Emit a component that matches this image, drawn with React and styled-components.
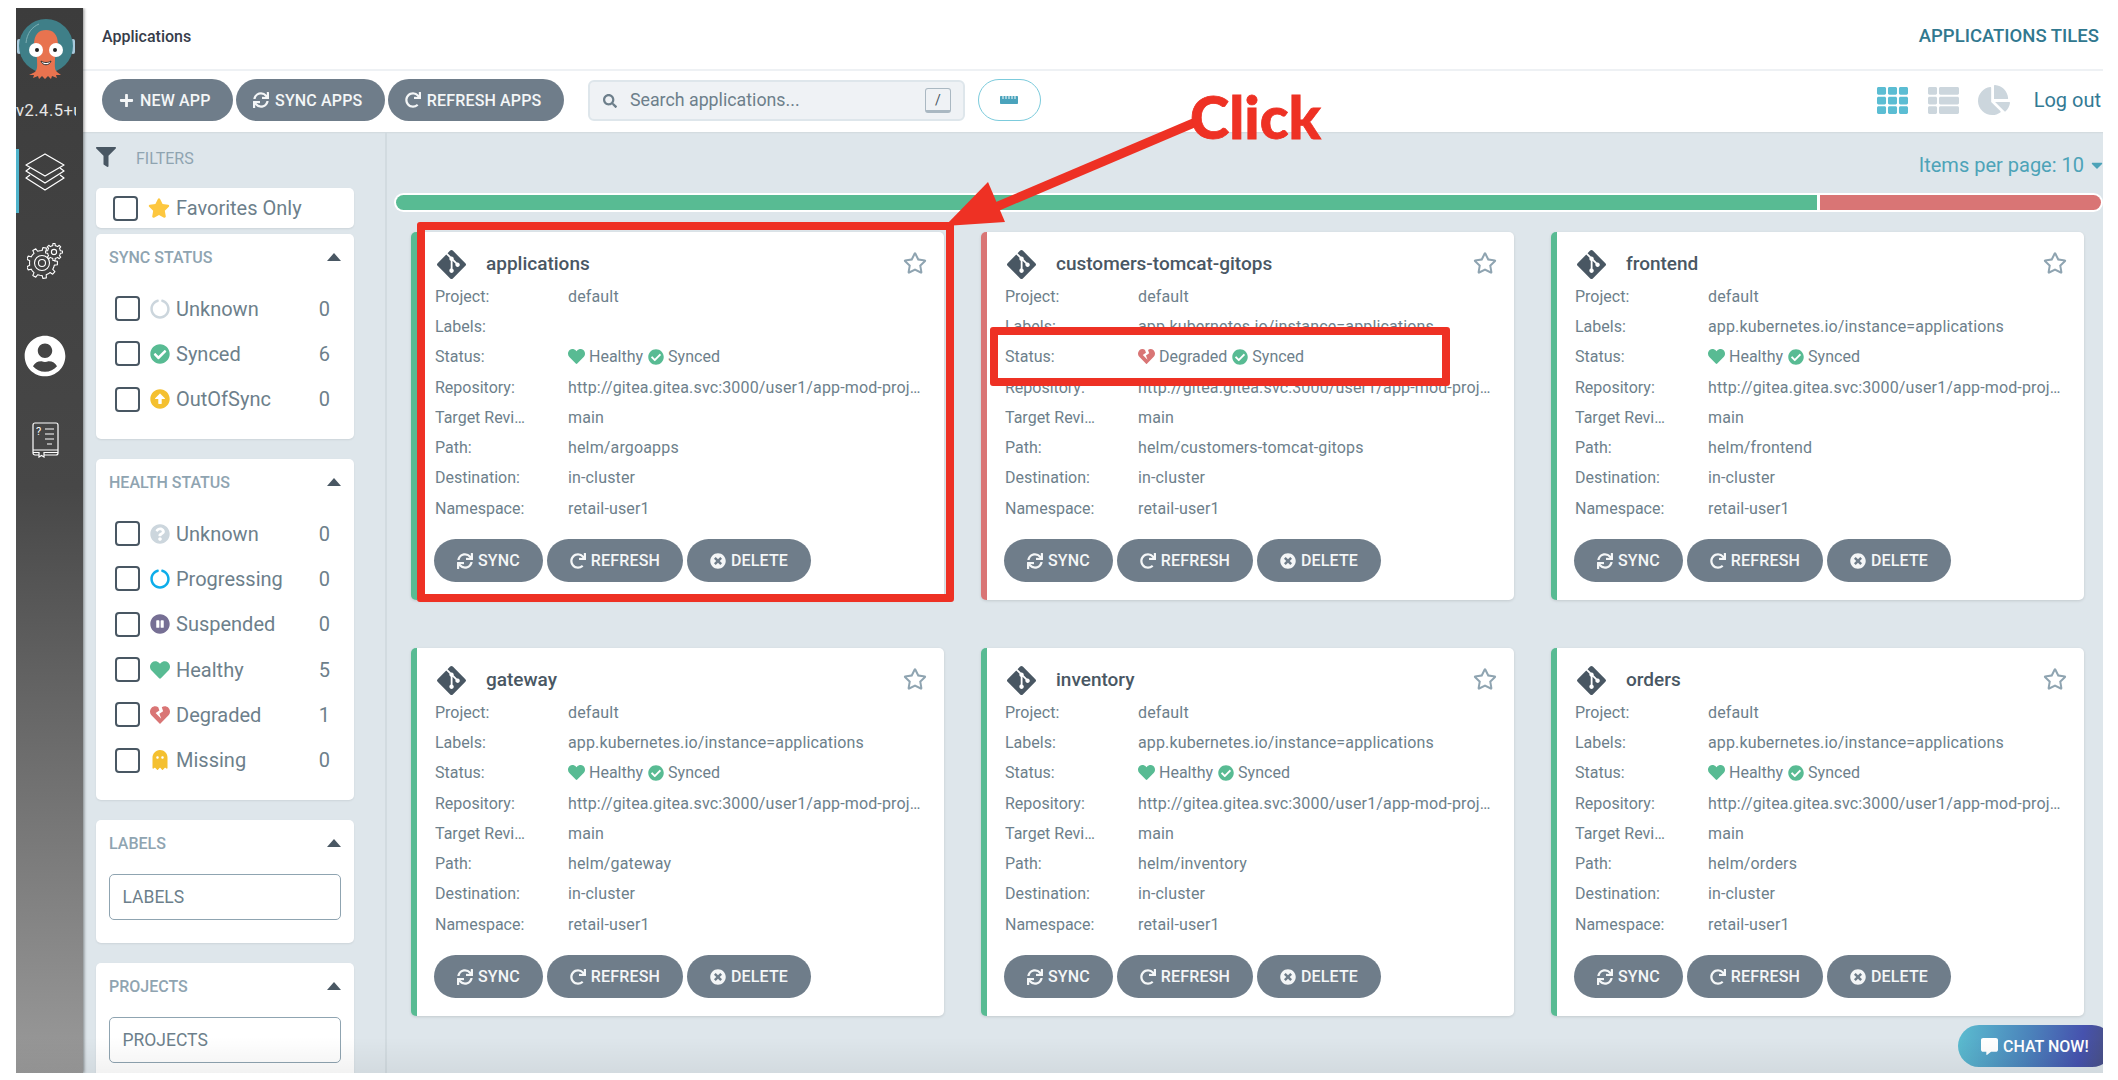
import React from 'react';
import styled, { createGlobalStyle } from 'styled-components';
import {
  FaPlus, FaSync, FaRedo, FaSearch, FaRulerHorizontal, FaTh, FaThList, FaChartPie, FaFilter, FaStar,
  FaRegStar, FaCaretDown, FaCircleNotch, FaCheckCircle, FaArrowAltCircleUp, FaQuestionCircle,
  FaPauseCircle, FaHeart, FaHeartBroken, FaGhost, FaGitAlt, FaTimesCircle, FaUserCircle, FaCommentAlt,
} from 'react-icons/fa';

const GlobalStyle = createGlobalStyle`
  html, body { margin: 0; padding: 0; background: #fff; }
  body { font-family: Roboto, "Liberation Sans", sans-serif; }
  * { box-sizing: border-box; }
`;

const gearPath = (cx, cy, r1, r2, n) => {
  let d = '';
  for (let i = 0; i < n; i++) {
    const step = (Math.PI * 2) / n;
    const a = i * step;
    const pts = [
      [r1, a - step * 0.5],
      [r1, a - step * 0.24],
      [r2, a - step * 0.16],
      [r2, a + step * 0.16],
      [r1, a + step * 0.24],
    ];
    pts.forEach(([r, t], j) => {
      d += `${i === 0 && j === 0 ? 'M' : 'L'}${(cx + r * Math.cos(t)).toFixed(2)} ${(cy + r * Math.sin(t)).toFixed(2)}`;
    });
  }
  return d + 'Z';
};

const ArgoLogo = () => (
  <svg width="60" height="62" viewBox="0 0 60 62">
    <rect x="1" y="20" width="4" height="15" rx="2" fill="#a9c9dc" />
    <rect x="55" y="20" width="4" height="15" rx="2" fill="#a9c9dc" />
    <circle cx="30" cy="27" r="27" fill="#3f7f88" />
    <path d="M10 24C11 14 16 8 23 5" fill="none" stroke="#7fb0b5" strokeWidth="1" />
    <path d="M19 53c3-3 2-8 2-13 0-3-3-7-3-14C18 15 23 11 30 11s12 4 12 15c0 7-3 11-3 14 0 5-1 10 2 13l4 3-5 0 1 3-5-2-1 3-3-3-3 3-3-3-3 3-1-3-5 2 1-3-5 0z" fill="#e8734f" />
    <circle cx="20" cy="31" r="7" fill="#fff" />
    <circle cx="40" cy="31" r="7" fill="#fff" />
    <circle cx="21" cy="31" r="2" fill="#222" />
    <circle cx="39" cy="31" r="2" fill="#222" />
    <path d="M25 42c3 2 7 2 10 0-1 5-9 5-10 0z" fill="#fff" stroke="#333" strokeWidth="1" />
  </svg>
);

const LayersIcon = () => (
  <svg width="40" height="38" viewBox="0 0 40 38" fill="none" stroke="#fff" strokeWidth="1.3" strokeLinejoin="round">
    <path d="M20 1 39 12 20 23 1 12Z" />
    <path d="M5 15 1 18 20 30 39 18 35 15" />
    <path d="M5 22 1 25 20 37 39 25 35 22" />
  </svg>
);

const GearsIcon = () => (
  <svg width="36" height="36" viewBox="0 0 36 36" fill="none" stroke="#fff" strokeWidth="1.1" strokeLinejoin="round">
    <path d={gearPath(15, 20, 12.5, 15.5, 9)} />
    <circle cx="15" cy="20" r="7.5" />
    <circle cx="15" cy="20" r="3.5" />
    <path d={gearPath(27, 9, 6.5, 8.5, 8)} fill="#414141" />
    <circle cx="27" cy="9" r="2.6" />
  </svg>
);

const BookIcon = () => (
  <svg width="27" height="36" viewBox="0 0 27 36" fill="none" stroke="#fff" strokeWidth="1.2">
    <rect x="1" y="1" width="25" height="32" rx="2" />
    <path d="M1 28h25M1 30.5h25" />
    <path d="M7 30v5l2.500-1.500L12 35v-5" fill="#444" />
    <path d="M13 7h9M13 12h9M13 17h9M15 22h5" />
    <text x="4" y="13" fill="#fff" stroke="none" fontSize="11" fontFamily="Roboto">?</text>
  </svg>
);

const Frame = styled.div`
  position: relative;
  display: flex;
  width: 2087px;
  height: 1065px;
  margin: 8px 15px 7px 16px;
  overflow: hidden;
  background: #fff;
`;

const Sidebar = styled.nav`
  flex: 0 0 67px;
  display: flex;
  flex-direction: column;
  background: linear-gradient(#3c3c3c 0%, #474747 45%, #9a9a9a 100%);
  box-shadow: 1px 0 3px rgba(0, 0, 0, 0.45);
  z-index: 2;
`;

const LogoWrap = styled.div`
  display: flex;
  justify-content: center;
  padding: 11px 7px 0 0;
`;

const Version = styled.div`
  margin-top: 18px;
  height: 24px;
  line-height: 24px;
  width: 60px;
  overflow: hidden;
  white-space: nowrap;
  font-size: 16.5px;
  letter-spacing: 0.5px;
  color: #e6e6e6;
`;

const NavList = styled.div`
  margin-top: 26px;
  display: flex;
  flex-direction: column;
`;

const NavItem = styled.div`
  height: 64px;
  display: flex;
  align-items: center;
  justify-content: center;
  margin-top: ${(p) => p.$mt || 0}px;
  padding-bottom: ${(p) => (p.$active ? 18 : 0)}px;
  border-left: 3px solid ${(p) => (p.$active ? '#4fb3cb' : 'transparent')};
  padding-right: 12px;
  color: #fff;
`;

const Main = styled.div`
  flex: 1;
  min-width: 0;
  display: flex;
  flex-direction: column;
`;

const Header = styled.header`
  height: 63px;
  display: flex;
  align-items: center;
  justify-content: space-between;
  padding: 0 4px 5px 19px;
  border-bottom: 2px solid #eef1f4;
`;

const Crumb = styled.div`
  font-size: 16px;
  font-weight: 500;
  color: #363c4a;
`;

const PageTitle = styled.div`
  font-size: 18.500px;
  font-weight: 500;
  color: #31788f;
`;

const Toolbar = styled.div`
  height: 61px;
  display: flex;
  align-items: flex-start;
  padding: 8px 2px 0 19px;
`;

const ActionGroup = styled.div`
  display: flex;
  gap: 3px;
`;

const PillButton = styled.button`
  display: inline-flex;
  align-items: center;
  justify-content: center;
  gap: ${(p) => (p.$small ? 5 : 6)}px;
  height: ${(p) => (p.$small ? 43 : 42)}px;
  padding: ${(p) => (p.$small ? '0 23px' : '0 22.500px 0 17px')};
  border: 0;
  border-radius: 22px;
  background: #6f7d8a;
  color: #f4f6f7;
  font-family: inherit;
  font-size: 16px;
  font-weight: 500;
  letter-spacing: 0.15px;
  white-space: nowrap;
`;

const SearchBox = styled.div`
  width: 377px;
  height: 41px;
  margin-left: 24px;
  margin-top: 1px;
  display: flex;
  align-items: center;
  padding: 0 12px 0 13px;
  border: 2px solid #dee6eb;
  border-radius: 6px;
  background: #eff2f5;
  color: #6d7f8b;
`;

const SearchInput = styled.input`
  flex: 1;
  min-width: 0;
  margin-left: 11px;
  margin-top: -2px;
  border: 0;
  outline: 0;
  background: transparent;
  font-family: inherit;
  font-size: 17.800px;
  color: #6d7f8b;
  &::placeholder { color: #6d7f8b; opacity: 1; }
`;

const Kbd = styled.span`
  width: 26px;
  height: 25px;
  display: flex;
  align-items: center;
  justify-content: center;
  border: 1px solid #aab8c2;
  border-bottom-width: 3px;
  border-radius: 3px;
  font-size: 14px;
  color: #495763;
`;

const ToggleButton = styled.button`
  width: 63px;
  height: 42px;
  margin-left: 13px;
  display: flex;
  align-items: center;
  justify-content: center;
  border: 1.500px solid #7ccbdc;
  border-radius: 21px;
  background: #fff;
  color: #4aa3bc;
`;

const ViewSwitch = styled.div`
  margin-left: auto;
  display: flex;
  align-items: center;
  height: 42px;
  color: #ccd6dd;
`;

const ViewIcon = styled.span`
  display: flex;
  margin-right: ${(p) => p.$mr}px;
  color: ${(p) => (p.$active ? '#5bbdd3' : '#ccd6dd')};
`;

const LogOut = styled.span`
  font-size: 20px;
  color: #337a94;
`;

const Body = styled.div`
  flex: 1;
  min-height: 0;
  display: flex;
  background: #dee6eb;
  box-shadow: inset 0 2px 2px -1px rgba(0, 0, 0, 0.06);
`;

const Filters = styled.aside`
  flex: 0 0 304px;
  padding: 15px 31px 0 13px;
  border-right: 2px solid #d2dbe0;
`;

const FiltersHead = styled.div`
  height: 22px;
  display: flex;
  align-items: center;
  gap: 20px;
  margin-bottom: 19px;
  color: #8fa4b1;
  font-size: 16px;
  svg { color: #495763; margin-top: -2px; }
`;

const FavoriteCard = styled.div`
  height: 40px;
  display: flex;
  align-items: center;
  padding-left: 17px;
  margin-bottom: 6px;
  border-radius: 5px;
  background: #fff;
  font-size: 20px;
  color: #6d7f8b;
  box-shadow: 0 1px 2px rgba(0, 0, 0, 0.08);
`;

const FilterCard = styled.section`
  height: ${(p) => p.$height}px;
  margin-bottom: 20px;
  padding: 13px 13px 0;
  border-radius: 5px;
  background: #fff;
  box-shadow: 0 1px 2px rgba(0, 0, 0, 0.08);
`;

const FilterTitle = styled.div`
  height: 20px;
  display: flex;
  align-items: center;
  justify-content: space-between;
  font-size: 16px;
  font-weight: 500;
  color: #8fa4b1;
`;

const CollapseCaret = styled.span`
  width: 0;
  height: 0;
  border-left: 7.500px solid transparent;
  border-right: 7.500px solid transparent;
  border-bottom: 8px solid #495763;
`;

const FilterRows = styled.div`
  margin-top: 19px;
`;

const FilterRow = styled.div`
  height: 45.300px;
  display: flex;
  align-items: center;
  padding: 0 11px 0 6px;
  font-size: 20px;
  color: #6d7f8b;
`;

const Checkbox = styled.span`
  flex: 0 0 25px;
  height: 25px;
  margin-right: 10px;
  border: 2px solid #495763;
  border-radius: 4px;
  background: #fff;
`;

const FilterIcon = styled.span`
  display: flex;
  margin-right: 6px;
  color: ${(p) => p.$color};
`;

const Count = styled.span`
  margin-left: auto;
`;

const FilterInput = styled.input`
  display: block;
  width: 100%;
  height: 46px;
  margin-top: 21px;
  padding: 0 12.500px;
  border: 1px solid #8fa4b1;
  border-radius: 5px;
  outline: 0;
  background: #fff;
  font-family: inherit;
  font-size: 17.500px;
  color: #6d7f8b;
  &::placeholder { color: #6d7f8b; opacity: 1; }
`;

const Content = styled.div`
  flex: 1;
  min-width: 0;
  padding-top: 21px;
`;

const ItemsPerPage = styled.div`
  height: 24px;
  display: flex;
  align-items: center;
  justify-content: flex-end;
  gap: 4px;
  font-size: 20px;
  color: #4da3b8;
  svg { margin-right: -3px; }
`;

const StatusBar = styled.div`
  height: 19px;
  margin: 16px 0 20px 7px;
  display: flex;
  gap: 3px;
  padding: 2px;
  border-radius: 10px;
  background: #fff;
`;

const BarPart = styled.div`
  flex: ${(p) => p.$grow} 0 0;
  background: ${(p) => p.$color};
  border-radius: ${(p) => p.$radius};
`;

const CardGrid = styled.div`
  display: grid;
  grid-template-columns: repeat(3, 533px);
  grid-auto-rows: 368px;
  column-gap: 37px;
  row-gap: 48px;
  margin-left: 24px;
`;

const AppCard = styled.article`
  padding: 18px 18px 0;
  border-left: 6px solid ${(p) => (p.$degraded ? '#d97575' : '#58bb93')};
  border-radius: 5px;
  background: #fff;
  box-shadow: 0 1px 3px rgba(0, 0, 0, 0.12);
`;

const CardHead = styled.div`
  height: 31px;
  display: flex;
  align-items: center;
  gap: 18px;
  padding-bottom: 3px;
  color: #495763;
`;

const CardName = styled.div`
  padding-bottom: 2px;
  font-size: 19px;
  font-weight: 500;
  color: #495763;
`;

const StarButton = styled.span`
  margin-left: auto;
  margin-right: -1px;
  padding-bottom: 2px;
  display: flex;
  color: #8fa4b1;
`;

const InfoRow = styled.div`
  height: 30.300px;
  display: grid;
  grid-template-columns: 92px 353px;
  column-gap: 41px;
  align-items: center;
  font-size: 16px;
  color: #6d7f8b;
`;

const InfoLabel = styled.span`
  overflow: hidden;
  white-space: nowrap;
  text-overflow: ellipsis;
`;

const InfoValue = styled.span`
  overflow: hidden;
  white-space: nowrap;
  text-overflow: ellipsis;
  letter-spacing: 0.15px;
`;

const StatusValue = styled.span`
  display: flex;
  align-items: center;
  gap: 4px;
`;

const StatusIcon = styled.span`
  display: flex;
  margin-left: ${(p) => p.$ml || 0}px;
  color: ${(p) => p.$color};
`;

const CardActions = styled.div`
  display: flex;
  gap: 4px;
  margin: 16px 0 0 -1px;
`;

const ClickLabel = styled.div`
  position: absolute;
  left: 1174px;
  top: 73px;
  font-family: Lato, "Liberation Sans", sans-serif;
  font-size: 59.500px;
  font-weight: 900;
  line-height: 70px;
  color: #ee3124;
  -webkit-text-stroke: 0.8px #ee3124;
  z-index: 5;
`;

const ArrowLayer = styled.svg`
  position: absolute;
  left: 900px;
  top: 90px;
  z-index: 5;
`;

const Highlight = styled.div`
  position: absolute;
  left: ${(p) => p.$left}px;
  top: ${(p) => p.$top}px;
  width: ${(p) => p.$width}px;
  height: ${(p) => p.$height}px;
  border: 8px solid #ee3124;
  border-radius: 3px;
  z-index: 4;
`;

const ChatButton = styled.button`
  position: absolute;
  right: -10px;
  bottom: 6px;
  width: 155px;
  height: 42px;
  display: flex;
  align-items: center;
  gap: 5px;
  padding: 0 0 0 23px;
  border: 0;
  border-radius: 21px;
  background: linear-gradient(100deg, #5bbdd0 0%, #4b83bb 45%, #4652ae 78%, #4a5078 100%);
  color: #fff;
  font-family: inherit;
  font-size: 16px;
  font-weight: 500;
  z-index: 3;
`;

const BottomFade = styled.div`
  position: absolute;
  left: 0;
  right: 0;
  bottom: 0;
  height: 36px;
  background: linear-gradient(rgba(0, 0, 0, 0), rgba(0, 0, 0, 0.05));
  pointer-events: none;
  z-index: 3;
`;

const LABEL = 'app.kubernetes.io/instance=applications';

const apps = [
  { name: 'applications', labels: '', path: 'helm/argoapps' },
  { name: 'customers-tomcat-gitops', labels: LABEL, path: 'helm/customers-tomcat-gitops', degraded: true },
  { name: 'frontend', labels: LABEL, path: 'helm/frontend' },
  { name: 'gateway', labels: LABEL, path: 'helm/gateway' },
  { name: 'inventory', labels: LABEL, path: 'helm/inventory' },
  { name: 'orders', labels: LABEL, path: 'helm/orders' },
];

const syncFilters = [
  { label: 'Unknown', count: 0, Icon: FaCircleNotch, color: '#ccd6dd' },
  { label: 'Synced', count: 6, Icon: FaCheckCircle, color: '#58bb93' },
  { label: 'OutOfSync', count: 0, Icon: FaArrowAltCircleUp, color: '#f4c030' },
];

const healthFilters = [
  { label: 'Unknown', count: 0, Icon: FaQuestionCircle, color: '#ccd6dd' },
  { label: 'Progressing', count: 0, Icon: FaCircleNotch, color: '#0dadea' },
  { label: 'Suspended', count: 0, Icon: FaPauseCircle, color: '#766f94' },
  { label: 'Healthy', count: 5, Icon: FaHeart, color: '#58bb93' },
  { label: 'Degraded', count: 1, Icon: FaHeartBroken, color: '#d97575' },
  { label: 'Missing', count: 0, Icon: FaGhost, color: '#f4c030' },
];

const FilterList = ({ items }) => (
  <FilterRows>
    {items.map((f) => (
      <FilterRow key={f.label}>
        <Checkbox />
        <FilterIcon $color={f.color}><f.Icon size={20} /></FilterIcon>
        {f.label}
        <Count>{f.count}</Count>
      </FilterRow>
    ))}
  </FilterRows>
);

const Card = ({ app }) => (
  <AppCard $degraded={app.degraded}>
    <CardHead>
      <FaGitAlt size={33} />
      <CardName>{app.name}</CardName>
      <StarButton><FaRegStar size={24} /></StarButton>
    </CardHead>
    <InfoRow><InfoLabel>Project:</InfoLabel><InfoValue>default</InfoValue></InfoRow>
    <InfoRow><InfoLabel>Labels:</InfoLabel><InfoValue>{app.labels}</InfoValue></InfoRow>
    <InfoRow>
      <InfoLabel>Status:</InfoLabel>
      <StatusValue>
        <StatusIcon $color={app.degraded ? '#d97575' : '#58bb93'}>
          {app.degraded ? <FaHeartBroken size={17} /> : <FaHeart size={17} />}
        </StatusIcon>
        {app.degraded ? 'Degraded' : 'Healthy'}
        <StatusIcon $color="#58bb93" $ml={1}><FaCheckCircle size={16} /></StatusIcon>
        Synced
      </StatusValue>
    </InfoRow>
    <InfoRow>
      <InfoLabel>Repository:</InfoLabel>
      <InfoValue>http://gitea.gitea.svc:3000/user1/app-mod-projects.git</InfoValue>
    </InfoRow>
    <InfoRow><InfoLabel>Target Revision:</InfoLabel><InfoValue>main</InfoValue></InfoRow>
    <InfoRow><InfoLabel>Path:</InfoLabel><InfoValue>{app.path}</InfoValue></InfoRow>
    <InfoRow><InfoLabel>Destination:</InfoLabel><InfoValue>in-cluster</InfoValue></InfoRow>
    <InfoRow><InfoLabel>Namespace:</InfoLabel><InfoValue>retail-user1</InfoValue></InfoRow>
    <CardActions>
      <PillButton $small><FaSync size={16} />SYNC</PillButton>
      <PillButton $small><FaRedo size={16} />REFRESH</PillButton>
      <PillButton $small><FaTimesCircle size={16} />DELETE</PillButton>
    </CardActions>
  </AppCard>
);

const App = () => (
  <>
    <GlobalStyle />
    <Frame>
      <Sidebar>
        <LogoWrap><ArgoLogo /></LogoWrap>
        <Version>v2.4.5+unknown</Version>
        <NavList>
          <NavItem $active><LayersIcon /></NavItem>
          <NavItem $mt={16}><GearsIcon /></NavItem>
          <NavItem $mt={31}><FaUserCircle size={42} /></NavItem>
          <NavItem $mt={20}><BookIcon /></NavItem>
        </NavList>
      </Sidebar>
      <Main>
        <Header>
          <Crumb>Applications</Crumb>
          <PageTitle>APPLICATIONS TILES</PageTitle>
        </Header>
        <Toolbar>
          <ActionGroup>
            <PillButton><FaPlus size={15} />NEW APP</PillButton>
            <PillButton><FaSync size={16} />SYNC APPS</PillButton>
            <PillButton><FaRedo size={16} />REFRESH APPS</PillButton>
          </ActionGroup>
          <SearchBox>
            <FaSearch size={14} />
            <SearchInput placeholder="Search applications..." />
            <Kbd>/</Kbd>
          </SearchBox>
          <ToggleButton><FaRulerHorizontal size={18} /></ToggleButton>
          <ViewSwitch>
            <ViewIcon $active $mr={20}><FaTh size={31} /></ViewIcon>
            <ViewIcon $mr={19}><FaThList size={31} /></ViewIcon>
            <ViewIcon $mr={24}><FaChartPie size={32} /></ViewIcon>
            <LogOut>Log out</LogOut>
          </ViewSwitch>
        </Toolbar>
        <Body>
          <Filters>
            <FiltersHead><FaFilter size={20} />FILTERS</FiltersHead>
            <FavoriteCard>
              <Checkbox />
              <FilterIcon $color="#fdc73f"><FaStar size={22} /></FilterIcon>
              Favorites Only
            </FavoriteCard>
            <FilterCard $height={205}>
              <FilterTitle>SYNC STATUS<CollapseCaret /></FilterTitle>
              <FilterList items={syncFilters} />
            </FilterCard>
            <FilterCard $height={341}>
              <FilterTitle>HEALTH STATUS<CollapseCaret /></FilterTitle>
              <FilterList items={healthFilters} />
            </FilterCard>
            <FilterCard $height={123}>
              <FilterTitle>LABELS<CollapseCaret /></FilterTitle>
              <FilterInput placeholder="LABELS" />
            </FilterCard>
            <FilterCard $height={123}>
              <FilterTitle>PROJECTS<CollapseCaret /></FilterTitle>
              <FilterInput placeholder="PROJECTS" />
            </FilterCard>
          </Filters>
          <Content>
            <ItemsPerPage>Items per page: 10 <FaCaretDown size={18} /></ItemsPerPage>
            <StatusBar>
              <BarPart $grow={1423} $color="#58bb93" $radius="8px 0 0 8px" />
              <BarPart $grow={281} $color="#d97575" $radius="0 8px 8px 0" />
            </StatusBar>
            <CardGrid>
              {apps.map((a) => <Card key={a.name} app={a} />)}
            </CardGrid>
          </Content>
        </Body>
      </Main>
      <Highlight $left={401} $top={214} $width={537} $height={380} />
      <Highlight $left={974} $top={319} $width={460} $height={59} />
      <ArrowLayer width="300" height="150" viewBox="0 0 300 150">
        <path d="M280 24 80 109" stroke="#ee3124" strokeWidth="9" fill="none" />
        <path d="M29 128 72 84 89 124Z" fill="#ee3124" />
      </ArrowLayer>
      <ClickLabel>Click</ClickLabel>
      <ChatButton><FaCommentAlt size={17} />CHAT NOW!</ChatButton>
      <BottomFade />
    </Frame>
  </>
);

export default App;
